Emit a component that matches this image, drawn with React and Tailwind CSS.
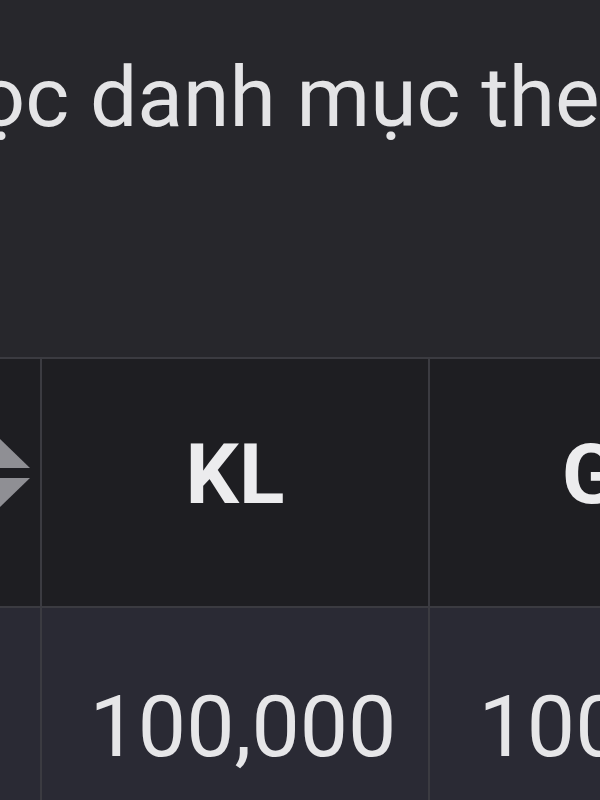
import React from 'react';

const SortIcon = () => (
  <svg width="64" height="72" viewBox="0 0 64 72" className="block">
    <polygon points="32,0 64,31 0,31" fill="#8f8f94" />
    <polygon points="0,41 64,41 32,72" fill="#8f8f94" />
  </svg>
);

const App = () => {
  return (
    <div className="w-[600px] h-[800px] overflow-hidden bg-[#27272c] font-['Roboto',sans-serif]">
      {/* Tiêu đề */}
      <div className="h-[357px] pt-[56px] -ml-[68px] whitespace-nowrap">
        <p className="text-[84px] leading-none text-[#e4e4e6]">Lọc danh mục theo</p>
      </div>

      {/* Bảng */}
      <div className="-ml-[60px] w-[1000px] border-t-2 border-[#3b3b41]">
        <div className="flex h-[249px] bg-[#1e1e22] border-b-2 border-[#3b3b41]">
          <div className="w-[102px] shrink-0 flex items-center justify-end pr-[10px] pb-[20px] border-r-2 border-[#3b3b41]">
            <SortIcon />
          </div>
          <div className="w-[388px] shrink-0 flex items-center justify-center pb-[16px] border-r-2 border-[#3b3b41]">
            <span className="text-[84px] font-bold leading-none text-[#ececee]">KL</span>
          </div>
          <div className="w-[388px] shrink-0 flex items-center justify-center pb-[16px]">
            <span className="text-[84px] font-bold leading-none text-[#ececee]">Giá</span>
          </div>
        </div>
        <div className="flex h-[240px] bg-[#2a2a34]">
          <div className="w-[102px] shrink-0 border-r-2 border-[#3b3b41]" />
          <div className="w-[388px] shrink-0 flex justify-center pt-[76px] pl-[16px] border-r-2 border-[#3b3b41]">
            <span className="text-[86px] leading-none text-[#e6e6e8]">100,000</span>
          </div>
          <div className="w-[388px] shrink-0 flex justify-center pt-[76px] pl-[16px]">
            <span className="text-[86px] leading-none text-[#e6e6e8]">100,000</span>
          </div>
        </div>
      </div>
    </div>
  );
};

export default App;
